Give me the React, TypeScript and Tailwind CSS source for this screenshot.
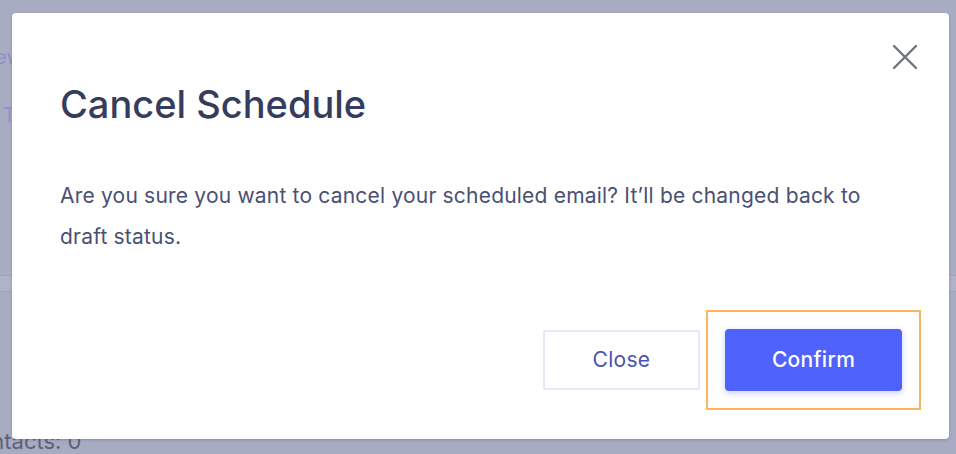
import React from "react"

const font = { fontFamily: "Inter, 'Noto Sans', sans-serif" }

function CloseIcon() {
  return (
    <svg width="26" height="26" viewBox="0 0 26 26" fill="none">
      <path d="M2 2L24 24M24 2L2 24" stroke="#707380" strokeWidth="2.4" strokeLinecap="round" />
    </svg>
  )
}

export default function App() {
  return (
    <div className="relative h-[454px] w-[956px] overflow-hidden bg-[#a8acc3]" style={font}>
      {/* page behind the overlay */}
      <div className="flex h-full flex-col">
        <div className="ml-[-52px] mt-[44px] text-[20px] leading-[26px] text-[#8d92c9]">Preview</div>
        <div className="ml-[3px] mt-[32px] text-[20px] leading-[26px] text-[#8d92c9]">T</div>
        <div className="mt-[147px] h-[17px] border-y border-[#a0a4bb] bg-[#b0b3c8]" />
        <div className="mt-auto mb-[1px] ml-[-38px] text-[22px] leading-[24px] text-[#5d6176]">Contacts: 0</div>
      </div>

      {/* modal */}
      <div className="absolute left-[12px] top-[13px] flex h-[426px] w-[937px] flex-col rounded-[4px] bg-white shadow-[0_1px_3px_rgba(40,44,70,0.25)]">
        <button className="absolute right-[31px] top-[31px]">
          <CloseIcon />
        </button>
        <h2 className="ml-[48px] mt-[67px] text-[38px] font-medium leading-[48px] tracking-[0px] text-[#353c5e]">
          Cancel Schedule
        </h2>
        <p className="ml-[48px] mt-[47px] max-w-[815px] text-[21px] leading-[41px] tracking-[0.2px] text-[#4a5072]">
          Are you sure you want to cancel your scheduled email? It’ll be changed back to draft status.
        </p>
        <div className="mt-auto mb-[29px] mr-[28px] flex items-center justify-end gap-[6px]">
          <button className="h-[60px] w-[157px] rounded-[2px] border-2 border-[#e6e9fc] text-[21px] tracking-[0.3px] text-[#4a54b4]">
            Close
          </button>
          <div className="border-2 border-[#fbb55e] p-[17px]">
            <button className="h-[62px] w-[177px] rounded-[4px] bg-[#5062fc] text-[21px] font-medium tracking-[0.3px] text-white shadow-[0_2px_6px_rgba(80,98,252,0.3)]">
              Confirm
            </button>
          </div>
        </div>
      </div>
    </div>
  )
}
